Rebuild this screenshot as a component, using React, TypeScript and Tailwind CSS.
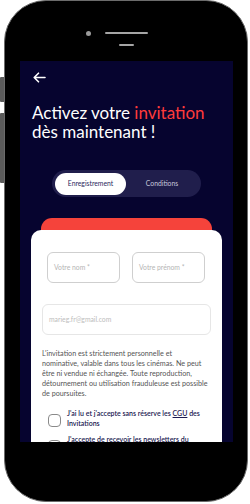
import React from "react";

export default function App() {
  const font = { fontFamily: "Lato, 'Noto Sans', sans-serif" };
  return (
    <div className="relative w-[250px] h-[504px] bg-white overflow-hidden" style={font}>
      {/* side buttons */}
      <div className="absolute left-0 top-[77px] w-[5px] h-[25px] bg-[#5b5b5b] rounded-l-[1px]" />
      <div className="absolute left-0 top-[113px] w-[5px] h-[70px] bg-[#5b5b5b] rounded-l-[1px]" />
      {/* phone body */}
      <div className="relative ml-[4px] w-[244px] h-[502px] rounded-[42px] bg-black border border-[#6b6b6b] box-border">
        {/* speaker */}
        <div className="absolute left-[81px] top-[30px] w-[5px] h-[5px] rounded-full bg-[#9a9a9a]" />
        <div className="absolute left-[100px] top-[31px] w-[43px] h-[2px] rounded-full bg-[#a5a5a5]" />
        <div className="absolute left-[114px] top-[43px] w-[15px] h-[2px] rounded-full bg-[#a5a5a5]" />
        {/* screen */}
        <div className="ml-[15px] mt-[60px] w-[213px] h-[381px] bg-[#06042f] overflow-hidden flex flex-col">
          <div className="pl-[13px] pt-[11px] h-[22px]">
            <svg className="block" width="13" height="11" viewBox="0 0 13 11" fill="none" stroke="white" strokeWidth="1.6" strokeLinecap="round" strokeLinejoin="round">
              <path d="M12 5.5H1.5M5.5 1.2L1.2 5.5L5.5 9.8" />
            </svg>
          </div>
          <div className="pl-[12px] mt-[20px] text-[17px] leading-[19px] text-white font-normal">
            Activez votre <span className="text-[#ff3b3b]">invitation</span>
            <br />
            dès maintenant !
          </div>
          <div className="mt-[29px] self-center flex items-center w-[149px] h-[27px] shrink-0 rounded-full bg-[#201e4c] px-[3px]">
            <div className="w-[71px] h-[22px] rounded-full bg-white flex items-center justify-center text-[6.8px] font-normal text-[#2b2960]">
              Enregistrement
            </div>
            <div className="flex-1 flex items-center justify-center text-[6.8px] font-normal text-[#c9c8dc]">
              Conditions
            </div>
          </div>
          <div className="mt-[21px] mx-[21px] h-[22px] shrink-0 rounded-t-[11px] bg-[#f5433b]" />
          <div className="-mt-[10px] mx-[11px] bg-white rounded-t-[10px] px-[11px] pt-[22px] flex flex-col shrink-0">
            <div className="flex gap-[12px] pl-[5px] pr-[6px]">
              <div className="flex-1 h-[31px] rounded-[6px] border border-[#cfcfcf] flex items-center pl-[6px] text-[6.8px] text-[#b5b5b5]">
                Votre nom *
              </div>
              <div className="flex-1 h-[31px] rounded-[6px] border border-[#cfcfcf] flex items-center pl-[6px] text-[6.8px] text-[#b5b5b5]">
                Votre prénom *
              </div>
            </div>
            <div className="mt-[21px] h-[31px] rounded-[6px] border border-[#e6e6e6] flex items-center pl-[6px] text-[6.8px] text-[#bdbdbd]">
              marieg.fr@gmail.com
            </div>
            <p className="mt-[14px] text-[7.2px] leading-[10px] text-[#555555] whitespace-nowrap">
              L'invitation est strictement personnelle et
              <br />
              nominative, valable dans tous les cinémas. Ne peut
              <br />
              être ni vendue ni échangée. Toute reproduction,
              <br />
              détournement ou utilisation frauduleuse est possible
              <br />
              de poursuites.
            </p>
            <div className="mt-[10px] flex items-start gap-[6px] pl-[6px]">
              <div className="mt-[5px] w-[13px] h-[13px] shrink-0 rounded-[4px] border border-[#8a8a8a]" />
              <div className="text-[7px] leading-[9.5px] font-semibold text-[#1c1a52]">
                J'ai lu et j'accepte sans réserve les <span className="underline">CGU</span> des
                <br />
                Invitations
              </div>
            </div>
            <div className="mt-[7px] flex items-start gap-[6px] pl-[6px]">
              <div className="mt-[5px] w-[13px] h-[13px] shrink-0 rounded-[4px] border border-[#8a8a8a]" />
              <div className="text-[7px] leading-[9.5px] font-semibold text-[#1c1a52]">
                J'accepte de recevoir les newsletters du
              </div>
            </div>
          </div>
        </div>
      </div>
    </div>
  );
}
